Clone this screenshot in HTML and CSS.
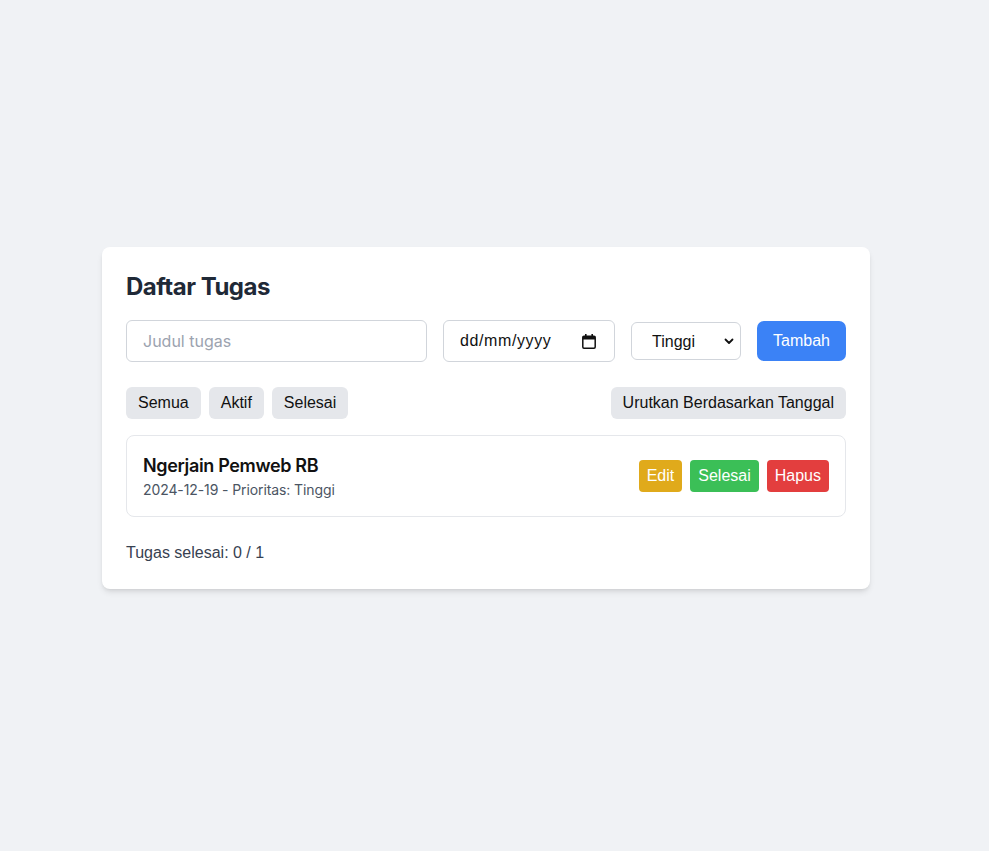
FILE: index.html
```html
<!DOCTYPE html>
<html lang="id">
<head>
<meta charset="utf-8">
<title>Daftar Tugas</title>
<link rel="stylesheet" href="styles.css">
</head>
<body>
<main class="card">
  <h1 class="title">Daftar Tugas</h1>
  <form class="add-row" onsubmit="return false">
    <input class="text-input" type="text" placeholder="Judul tugas">
    <div class="date-field">
      <span class="date-text">dd/mm/yyyy</span>
      <svg class="cal-icon" width="14" height="15" viewBox="0 0 14 15" aria-hidden="true">
        <rect x="3" y="0" width="1.6" height="3" fill="#111"/>
        <rect x="9.4" y="0" width="1.6" height="3" fill="#111"/>
        <rect x="0.8" y="2.2" width="12.4" height="12" rx="1.2" fill="none" stroke="#111" stroke-width="1.5"/>
        <rect x="0.8" y="2.2" width="12.4" height="3.3" fill="#111"/>
      </svg>
    </div>
    <div class="select-wrap">
      <select class="priority">
        <option>Tinggi</option>
        <option>Sedang</option>
        <option>Rendah</option>
      </select>
      <svg class="chev" width="10" height="7" viewBox="0 0 10 7" aria-hidden="true">
        <path d="M1.5 1.5 L5 5 L8.5 1.5" fill="none" stroke="#111" stroke-width="1.8" stroke-linecap="round" stroke-linejoin="round"/>
      </svg>
    </div>
    <button class="btn-add" type="button">Tambah</button>
  </form>

  <div class="filter-row">
    <div class="filters">
      <button class="chip" type="button">Semua</button>
      <button class="chip" type="button">Aktif</button>
      <button class="chip" type="button">Selesai</button>
    </div>
    <button class="chip" type="button">Urutkan Berdasarkan Tanggal</button>
  </div>

  <ul class="task-list">
    <li class="task">
      <div class="task-info">
        <div class="task-name">Ngerjain Pemweb RB</div>
        <div class="task-meta">2024-12-19 - Prioritas: Tinggi</div>
      </div>
      <div class="task-actions">
        <button class="act act-edit" type="button">Edit</button>
        <button class="act act-done" type="button">Selesai</button>
        <button class="act act-del" type="button">Hapus</button>
      </div>
    </li>
  </ul>

  <p class="summary">Tugas selesai: 0 / 1</p>
</main>
</body>
</html>
```

FILE: styles.css
```css
* { box-sizing: border-box; }

html, body {
  margin: 0;
  padding: 0;
}

body {
  background: #f0f2f5;
  min-height: 851px;
  padding: 247px 0 0 102px;
  font-family: "Liberation Sans", Arial, sans-serif;
  color: #111;
}

.card {
  width: 768px;
  background: #fff;
  border-radius: 8px;
  box-shadow: 0 4px 6px -1px rgba(0,0,0,0.1), 0 2px 4px -2px rgba(0,0,0,0.1);
  padding: 24px;
}

.title {
  margin: 0 0 17px;
  font-family: Inter, "Noto Sans", sans-serif;
  font-size: 24px;
  line-height: 32px;
  font-weight: 700;
  color: #1f2937;
  letter-spacing: -0.5px;
}

.add-row {
  display: flex;
  align-items: center;
  gap: 16px;
  margin: 0 0 25px;
  height: 42px;
}

.text-input {
  width: 301px;
  height: 42px;
  border: 1px solid #d1d5db;
  border-radius: 6px;
  padding: 0 16px;
  font-family: Inter, "Noto Sans", sans-serif;
  font-size: 16px;
  color: #111;
  outline: none;
}
.text-input::placeholder { color: #9ca3af; }

.date-field {
  width: 172px;
  height: 42px;
  border: 1px solid #d1d5db;
  border-radius: 6px;
  padding: 0 18px 0 16px;
  display: flex;
  align-items: center;
  justify-content: space-between;
  font-size: 16px;
  color: #111;
}
.date-text { letter-spacing: 0.6px; }
.cal-icon { display: block; }

.select-wrap {
  position: relative;
  width: 110px;
  height: 38px;
}
.priority {
  appearance: none;
  -webkit-appearance: none;
  width: 110px;
  height: 38px;
  border: 1px solid #d1d5db;
  border-radius: 6px;
  background: #fff;
  padding: 0 0 0 20px;
  font-family: "Liberation Sans", Arial, sans-serif;
  font-size: 16px;
  color: #111;
  outline: none;
}
.chev {
  position: absolute;
  right: 7px;
  top: 16px;
  pointer-events: none;
}

.btn-add {
  height: 40px;
  width: 89px;
  border: 0;
  border-radius: 7px;
  background: #3b82f6;
  color: #fff;
  font-family: "Liberation Sans", Arial, sans-serif;
  font-size: 16px;
  padding: 0;
}

.filter-row {
  display: flex;
  justify-content: space-between;
  align-items: center;
  margin-bottom: 16px;
}
.filters {
  display: flex;
  gap: 8px;
}
.chip {
  height: 32px;
  padding: 0 12px;
  border: 0;
  border-radius: 6px;
  background: #e5e7eb;
  color: #111;
  font-family: "Liberation Sans", Arial, sans-serif;
  font-size: 16px;
}

.task-list {
  list-style: none;
  margin: 0;
  padding: 0;
}
.task {
  height: 82px;
  border: 1px solid #e5e7eb;
  border-radius: 8px;
  padding: 0 16px;
  display: flex;
  align-items: center;
  justify-content: space-between;
}
.task-name {
  font-family: Inter, "Noto Sans", sans-serif;
  font-size: 18px;
  line-height: 28px;
  font-weight: 600;
  color: #111;
  letter-spacing: -0.35px;
}
.task-meta {
  font-family: Inter, "Noto Sans", sans-serif;
  font-size: 14px;
  line-height: 20px;
  color: #4b5563;
  letter-spacing: -0.1px;
}
.task-actions {
  display: flex;
  gap: 8px;
}
.act {
  height: 32px;
  padding: 0 8px;
  border: 0;
  border-radius: 4px;
  color: #fff;
  font-family: "Liberation Sans", Arial, sans-serif;
  font-size: 16px;
}
.act-edit { background: #e0aa1b; }
.act-done { background: #3bbf57; }
.act-del { background: #e33e3e; }

.summary {
  margin: 24px 0 0;
  font-size: 16px;
  line-height: 24px;
  color: #374151;
}
```
